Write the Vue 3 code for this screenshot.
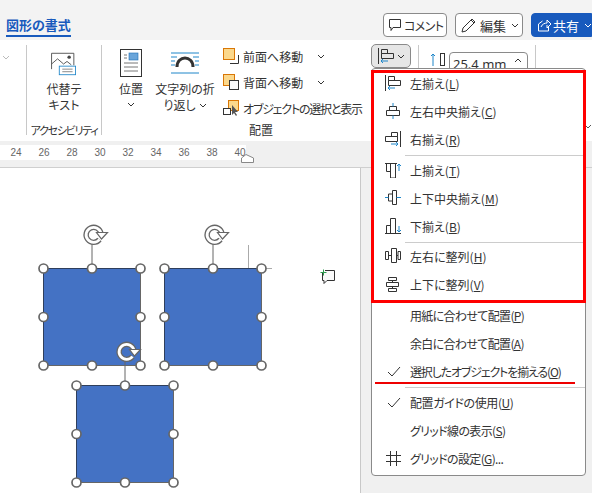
<script setup>
const groupA = [
  { t: '左揃え', k: 'L', d: 'M.5 0v16 M3.500 1.500h6v4h-6z M3.500 5.500h12v5h-12z', b: 'M3 13h7 M5 11l-2 2 2 2' },
  { t: '左右中央揃え', k: 'C', d: 'M4.500 3.500h7v4h-7z M1.500 7.500h13v5h-13z', b: 'M8 0v3.500 M8 12.500V16' },
  { t: '右揃え', k: 'R', d: 'M15.500 0v16 M6.500 1.500h6v4h-6z M.5 5.500h12v5H.5z', b: 'M6 13h7 M11 11l2 2-2 2' }
]
const groupB = [
  { t: '上揃え', k: 'T', d: 'M0 1.500h12 M1.500 1.500h4v8h-4z M5.500 1.500h5V16h-5z', b: 'M14 9V2 M12 4l2-2 2 2' },
  { t: '上下中央揃え', k: 'M', d: 'M3.500 4h4v7h-4z M7.500 .5h4v14h-4z', b: 'M0 7.500h3.500 M11.500 7.500H16' },
  { t: '下揃え', k: 'B', d: 'M0 15.500h16 M1.500 7.500h4v8h-4z M5.500 .5h5v15h-5z', b: 'M14 8v6 M12 12l2 2 2-2' }
]
const groupC = [
  { t: '左右に整列', k: 'H', d: 'M.5 3.500h3v8h-3z M6.500 .5h5v14h-5z M13 3.500h2.500v8H13z M3.500 7.500h3 M11.500 7.500H13', b: '' },
  { t: '上下に整列', k: 'V', d: 'M3.500 1.500h8v3h-8z M1.500 6.500h12v4h-12z M3.500 12.500h8v3h-8z M7.500 4.500v2 M7.500 10.500v2', b: '' }
]
const handlePoints = [[0,0],[48.5,0],[97,0],[0,48.5],[97,48.5],[0,97],[48.5,97],[97,97]]
const shapes = [
  { x: 43.5, y: 268.5, rot: [93.5, 234.5] },
  { x: 164.5, y: 268.5, rot: [214.5, 234.5] },
  { x: 76.5, y: 385.5, rot: [126.5, 351.5] }
]
const rulerNums = [24, 26, 28, 30, 32, 34, 36, 38, 40]
</script>

<template>
  <div class="app">
    <header class="title">
      <div class="tab">図形の書式</div>
      <div class="actions">
        <button class="btn comment">
          <svg class="ico" width="14" height="14" viewBox="0 0 14 14"><path d="M1.500 1.500h11v8H5l-2 3v-3H1.500z" fill="none" stroke="#333"/></svg>
          コメント
        </button>
        <button class="btn edit">
          <svg class="ico" width="18" height="18" viewBox="0 0 18 18"><path d="M2 16l1-4L12 3l3 3-9 9z M11 4l3 3" fill="none" stroke="#333"/></svg>
          編集
          <svg class="chev" width="8" height="5" viewBox="0 0 8 5"><path d="M1 1l3 3 3-3" fill="none" stroke="#333"/></svg>
        </button>
        <button class="btn share">
          <svg class="ico" width="14" height="14" viewBox="0 0 14 14"><path d="M1.500 6v7h10V9 M1.500 6l4-3 M4 9c1-3 4-4 6-4V2l4 4-4 4V7" fill="none" stroke="#fff"/></svg>
          共有
          <svg class="chev" width="8" height="5" viewBox="0 0 8 5"><path d="M1 1l3 3 3-3" fill="none" stroke="#fff"/></svg>
        </button>
      </div>
    </header>

    <section class="ribbon">
      <svg class="leftchev" width="8" height="5" viewBox="0 0 8 5"><path d="M1 1l3 3 3-3" fill="none" stroke="#bbb"/></svg>
      <div class="sep"></div>
      <div class="group acc">
        <div class="big">
          <svg width="32" height="28" viewBox="0 0 32 28">
            <path d="M1.500 20V1.500h26v14" fill="none" stroke="#444"/>
            <path d="M1.500 14l7-6 7 6 4-3 5 4" fill="none" stroke="#444"/>
            <circle cx="22" cy="6" r="2" fill="#444"/>
            <rect x="10.500" y="16.500" width="19" height="10" fill="#fff" stroke="#1f86c9"/>
            <path d="M14 20h12 M14 23h12" stroke="#777"/>
          </svg>
          <span>代替テ<br>キスト</span>
        </div>
        <div class="glabel">アクセシビリティ</div>
      </div>
      <div class="sep"></div>
      <div class="group arrange">
        <div class="arrange-top">
          <div class="big pos">
            <svg width="22" height="28" viewBox="0 0 22 28">
              <rect x="0.5" y="0.5" width="21" height="27" fill="#fff" stroke="#333"/>
              <rect x="9" y="4" width="9" height="7" fill="#6aa5da" stroke="#1f6fb5" stroke-width=".6"/>
              <path d="M4 6h3 M4 9h3 M4 14h14 M4 18h14 M4 22h14" stroke="#777"/>
            </svg>
            <span>位置</span>
            <svg class="chev-big" width="8" height="5" viewBox="0 0 8 5"><path d="M1 1l3 3 3-3" fill="none" stroke="#333"/></svg>
          </div>
          <div class="big wrap">
            <svg width="28" height="22" viewBox="0 0 28 22">
              <path d="M0 1h28 M0 5h6 M22 5h6 M0 9h4 M24 9h4 M0 13h4 M24 13h4 M0 21h28" stroke="#1f86c9"/>
              <path d="M6 15c0-12 16-12 16 0" fill="none" stroke="#333" stroke-width="3"/>
            </svg>
            <span>文字列の折<br>り返し<svg class="chev-in" width="8" height="5" viewBox="0 0 8 5"><path d="M1 1l3 3 3-3" fill="none" stroke="#333"/></svg></span>
          </div>
          <div class="stack">
            <div class="srow">
              <svg class="ico" width="16" height="16" viewBox="0 0 16 16"><path d="M7 15.500h8.500V7" fill="none" stroke="#333"/><rect x="0.5" y="0.5" width="11" height="11" fill="#fbd88c" stroke="#d97706"/></svg>
              <span class="stext">前面へ移動</span>
              <svg class="schev" width="8" height="5" viewBox="0 0 8 5"><path d="M1 1l3 3 3-3" fill="none" stroke="#333"/></svg>
            </div>
            <div class="srow">
              <svg class="ico" width="16" height="16" viewBox="0 0 16 16"><rect x="0.5" y="0.5" width="11" height="11" fill="#fbd88c" stroke="#d97706"/><rect x="6.5" y="6.5" width="9" height="9" fill="#fafafa" stroke="#333"/></svg>
              <span class="stext">背面へ移動</span>
              <svg class="schev" width="8" height="5" viewBox="0 0 8 5"><path d="M1 1l3 3 3-3" fill="none" stroke="#333"/></svg>
            </div>
            <div class="srow">
              <svg class="ico" width="16" height="16" viewBox="0 0 16 16"><rect x="5.5" y="0.5" width="10" height="10" fill="#fbd88c" stroke="#d97706"/><rect x="0.5" y="8.5" width="7" height="6" fill="#fff" stroke="#333"/><path d="M9 5v10l2-2 2 3 1-1-2-3h3z" fill="#555"/></svg>
              <span class="stext squeeze">オブジェクトの選択と表示</span>
            </div>
          </div>
        </div>
        <div class="glabel arr-label">配置</div>
      </div>
      <div class="alignbtn">
        <svg class="ico" width="16" height="16" viewBox="0 0 16 16"><path d="M.5 0v16 M3.500 1.500h6v4h-6z M3.500 5.500h12v5h-12z" fill="none" stroke="#333"/><path d="M3 13h7 M5 11l-2 2 2 2" fill="none" stroke="#1f86c9"/></svg>
        <svg class="ico" width="8" height="5" viewBox="0 0 8 5"><path d="M1 1l3 3 3-3" fill="none" stroke="#333"/></svg>
      </div>
      <div class="sep sep-r"></div>
      <div class="sizefield">
        <svg class="ico" width="16" height="14" viewBox="0 0 16 14"><path d="M3 14V2 M1 4l2-2 2 2" fill="none" stroke="#1f86c9"/><rect x="10.500" y="1.500" width="4" height="12" fill="none" stroke="#333"/></svg>
        <div class="input">25.4 mm <svg class="up" width="8" height="5" viewBox="0 0 8 5"><path d="M1 4l3-3 3 3" fill="none" stroke="#333"/></svg></div>
      </div>
      <div class="sep sep-r2"></div>
      <svg class="collapse" width="8" height="5" viewBox="0 0 8 5"><path d="M1 1l3 3 3-3" fill="none" stroke="#555"/></svg>
    </section>

    <div class="rulerband">
      <div class="ruler">
        <span v-for="n in rulerNums" :key="n" class="num">{{ n }}</span>
        <svg class="marker" width="13" height="9" viewBox="0 0 13 9"><path d="M.5 8.500V4L5 .5 12.500 4v4.500z" fill="#fff" stroke="#888"/></svg>
      </div>
    </div>

    <main class="doc">
      <div class="page"></div>
      <div class="side"></div>
      <svg class="canvas" width="360" height="325" viewBox="0 168 360 325">
        <path d="M248.500 245v24 M262 268.500h10" stroke="#aaa"/>
        <g v-for="(s, i) in shapes" :key="i">
          <rect :x="s.x" :y="s.y" width="97" height="97" fill="#4472c4" stroke="#2f3f5c"/>
          <path :d="`M${s.x} ${s.y + 97}H${s.x + 97}V${s.y}`" fill="none" stroke="#666"/>
        </g>
        <g v-for="(s, i) in shapes" :key="'h' + i">
          <path :d="`M${s.x + 48.5} ${s.y}V${s.rot[1] + 9}`" stroke="#666"/>
          <circle v-for="(p, j) in handlePoints" :key="j" :cx="s.x + p[0]" :cy="s.y + p[1]" r="4.500" fill="#fff" stroke="#666" stroke-width="1.700"/>
          <g :transform="`translate(${s.rot[0]},${s.rot[1]})`">
            <path d="M6 5A7.500 7.500 0 1 1 7.500 -1" fill="none" stroke="#666" stroke-width="5.400"/>
            <path d="M6 5A7.500 7.500 0 1 1 7.500 -1" fill="none" stroke="#fff" stroke-width="2.800"/>
            <path d="M3 -2h11l-6 6.500z" fill="#fff" stroke="#666" stroke-width="1.200"/>
          </g>
        </g>
        <g transform="translate(321,270)">
          <path d="M1.500 3V10.500H3V13.500L6 10.500H13.500V.5H4" fill="#fafafa" stroke="#333"/>
          <path d="M-.5 2.500h6 M2.500 -.5v6" stroke="#2e9b4f"/>
        </g>
      </svg>
    </main>

    <div class="menu">
      <template v-for="(g, gi) in [groupA, groupB, groupC]" :key="gi">
        <div v-for="it in g" :key="it.k" class="mi">
          <span class="ic">
            <svg class="ico" width="16" height="16" viewBox="0 0 16 16"><path :d="it.d" fill="none" stroke="#333"/><path v-if="it.b" :d="it.b" fill="none" stroke="#1f86c9"/></svg>
          </span>
          <span class="lb">{{ it.t }}(<u>{{ it.k }}</u>)</span>
        </div>
        <div class="msep" :class="{ pull: gi === 1 }"></div>
      </template>
      <div class="mi"><span class="ic"></span><span class="lb tight">用紙に合わせて配置(<u>P</u>)</span></div>
      <div class="mi"><span class="ic"></span><span class="lb tight">余白に合わせて配置(<u>A</u>)</span></div>
      <div class="mi"><span class="ic"><svg class="check" width="14" height="11" viewBox="0 0 14 11"><path d="M1 6l4 4 8-9" fill="none" stroke="#333"/></svg></span><span class="lb tighter">選択したオブジェクトを揃える(<u>O</u>)</span></div>
      <div class="msep"></div>
      <div class="mi"><span class="ic"><svg class="check" width="14" height="11" viewBox="0 0 14 11"><path d="M1 6l4 4 8-9" fill="none" stroke="#333"/></svg></span><span class="lb slight">配置ガイドの使用(<u>U</u>)</span></div>
      <div class="mi"><span class="ic"></span><span class="lb tight">グリッド線の表示(<u>S</u>)</span></div>
      <div class="mi"><span class="ic"><svg class="ico grid" width="15" height="15" viewBox="0 0 15 15"><path d="M4.500 0v15 M10.500 0v15 M0 4.500h15 M0 10.500h15" stroke="#333"/></svg></span><span class="lb tight">グリッドの設定(<u>G</u>)...</span></div>
    </div>
    <div class="redbox"></div>
    <div class="redline"></div>
  </div>
</template>

<style>
html, body { margin: 0; background: #fff; }
</style>

<style scoped>
.app {
  position: relative;
  width: 592px;
  height: 493px;
  overflow: hidden;
  font-family: "Noto Sans CJK JP", "Noto Sans", sans-serif;
  font-feature-settings: "palt";
  color: #333;
  font-size: 12px;
  display: flex;
  flex-direction: column;
}
.ico { flex: none; display: block; }
.title {
  height: 40px;
  background: #f3f3f3;
  display: flex;
  justify-content: space-between;
  flex: none;
}
.tab {
  margin: 15px 0 0 6px;
  height: 20px;
  border-bottom: 2px solid #185abd;
  color: #185abd;
  font-weight: 700;
  font-size: 13px;
  line-height: 20px;
  width: 65px;
  white-space: nowrap;
}
.actions { display: flex; gap: 8px; padding-top: 13px; }
.btn {
  height: 24px;
  box-sizing: border-box;
  border: 1px solid #8a8a8a;
  border-radius: 4px;
  background: #fff;
  font: inherit;
  font-size: 13px;
  color: #333;
  display: flex;
  align-items: center;
  gap: 2px;
  padding: 0 4px;
  white-space: nowrap;
}
.comment { width: 64px; font-size: 12px; letter-spacing: -.6px; }
.edit { width: 68px; }
.share { width: 61px; background: #185abd; border-color: #185abd; color: #fff; border-radius: 4px 0 0 4px; padding-left: 5px; }
.chev { margin-left: 3px; flex: none; }
.ribbon {
  position: relative;
  height: 101px;
  background: #fff;
  flex: none;
  display: flex;
}
.leftchev { position: absolute; left: 2px; top: 15px; }
.sep { width: 1px; height: 90px; margin-top: 5px; background: #c8c8c8; flex: none; }
.leftchev + .sep { margin-left: 26px; }
.group { display: flex; flex-direction: column; }
.acc { width: 74px; align-items: center; }
.big { display: flex; flex-direction: column; align-items: center; line-height: 16px; font-size: 12px; text-align: center; white-space: nowrap; flex: none; }
.acc .big { padding-top: 12px; height: 73px; box-sizing: border-box; }
.acc .big span { margin-top: 5px; }
.glabel { font-size: 12px; line-height: 16px; white-space: nowrap; }
.acc .glabel { margin-top: 9px; font-size: 11px; letter-spacing: -1.3px; }
.arrange { width: 268px; position: relative; }
.arrange-top { display: flex; height: 81px; }
.pos { width: 28px; margin-left: 15px; padding-top: 9px; }
.pos span { margin-top: 4px; }
.chev-big { margin-top: 5px; }
.wrap { width: 62px; margin-left: 9px; padding-top: 12px; }
.wrap span { margin-top: 7px; }
.chev-in { margin-left: 3px; vertical-align: 2px; }
.stack { flex: none; margin-left: 7px; padding-top: 8px; display: flex; flex-direction: column; gap: 10px; }
.srow { display: flex; align-items: center; height: 16px; gap: 4px; white-space: nowrap; font-size: 12px; }
.schev { margin-left: 10px; }
.squeeze { letter-spacing: -1.2px; }
.arr-label { position: absolute; left: 147px; top: 82px; }
.alignbtn {
  position: absolute;
  left: 371px;
  top: 4px;
  width: 40px;
  height: 24px;
  box-sizing: border-box;
  border: 1px solid #8a8a8a;
  border-radius: 5px;
  background: #e6e6e6;
  display: flex;
  align-items: center;
  justify-content: center;
  gap: 3px;
}
.sep-r { position: absolute; left: 418px; top: 0; height: 30px; }
.sizefield { position: absolute; left: 430px; top: 12px; display: flex; gap: 3px; }
.input { width: 79px; height: 24px; box-sizing: border-box; border: 1px solid #8a8a8a; border-radius: 4px 4px 0 0; font-size: 13px; line-height: 23px; padding-left: 3px; font-family: "Noto Sans", sans-serif; position: relative; }
.up { position: absolute; right: 5px; top: 5px; }
.sep-r2 { position: absolute; left: 535px; top: 0; height: 30px; }
.collapse { position: absolute; left: 584px; top: 84px; }
.rulerband {
  height: 27px;
  background: #f0f0f0;
  border-bottom: 1px solid #cfcfcf;
  padding-top: 4px;
  box-sizing: border-box;
  flex: none;
}
.ruler {
  position: relative;
  height: 15px;
  width: 246px;
  background: #fff;
  display: flex;
  padding-left: 2px;
  box-sizing: border-box;
}
.num { width: 28px; text-align: center; font-size: 10px; line-height: 15px; color: #666; font-family: "Liberation Sans", sans-serif; flex: none; }
.marker { position: absolute; left: 241px; top: 9px; }
.doc { position: relative; flex: 1; background: #fff; display: flex; }
.page { width: 361px; box-sizing: border-box; border-right: 1px solid #c8c8c8; background: #fff; }
.side { flex: 1; background: #f0f0f0; }
.canvas { position: absolute; left: 0; top: 0; }
.menu {
  position: absolute;
  left: 371px;
  top: 68px;
  width: 215px;
  height: 408px;
  box-sizing: border-box;
  background: #fff;
  border: 1px solid #8a8a8a;
  border-radius: 4px;
}
.mi { height: 28px; display: flex; align-items: center; font-size: 12px; white-space: nowrap; }
.ic { width: 38px; flex: none; display: flex; align-items: center; padding-left: 13px; box-sizing: border-box; }
.check { margin-left: 2px; }
.grid { margin-left: 1px; }
.tight { letter-spacing: -.65px; }
.tighter { letter-spacing: -1.15px; }
.slight { letter-spacing: -.4px; }
.msep { height: 1px; background: #ccc; margin: 2px 0 0 33px; }
.msep.pull { margin-bottom: -1px; }
.redbox {
  position: absolute;
  left: 371px;
  top: 70px;
  width: 215px;
  height: 233px;
  box-sizing: border-box;
  border: 3px solid #f00;
}
.redline {
  position: absolute;
  left: 375px;
  top: 382px;
  width: 200px;
  height: 2px;
  background: #e00;
}
</style>
